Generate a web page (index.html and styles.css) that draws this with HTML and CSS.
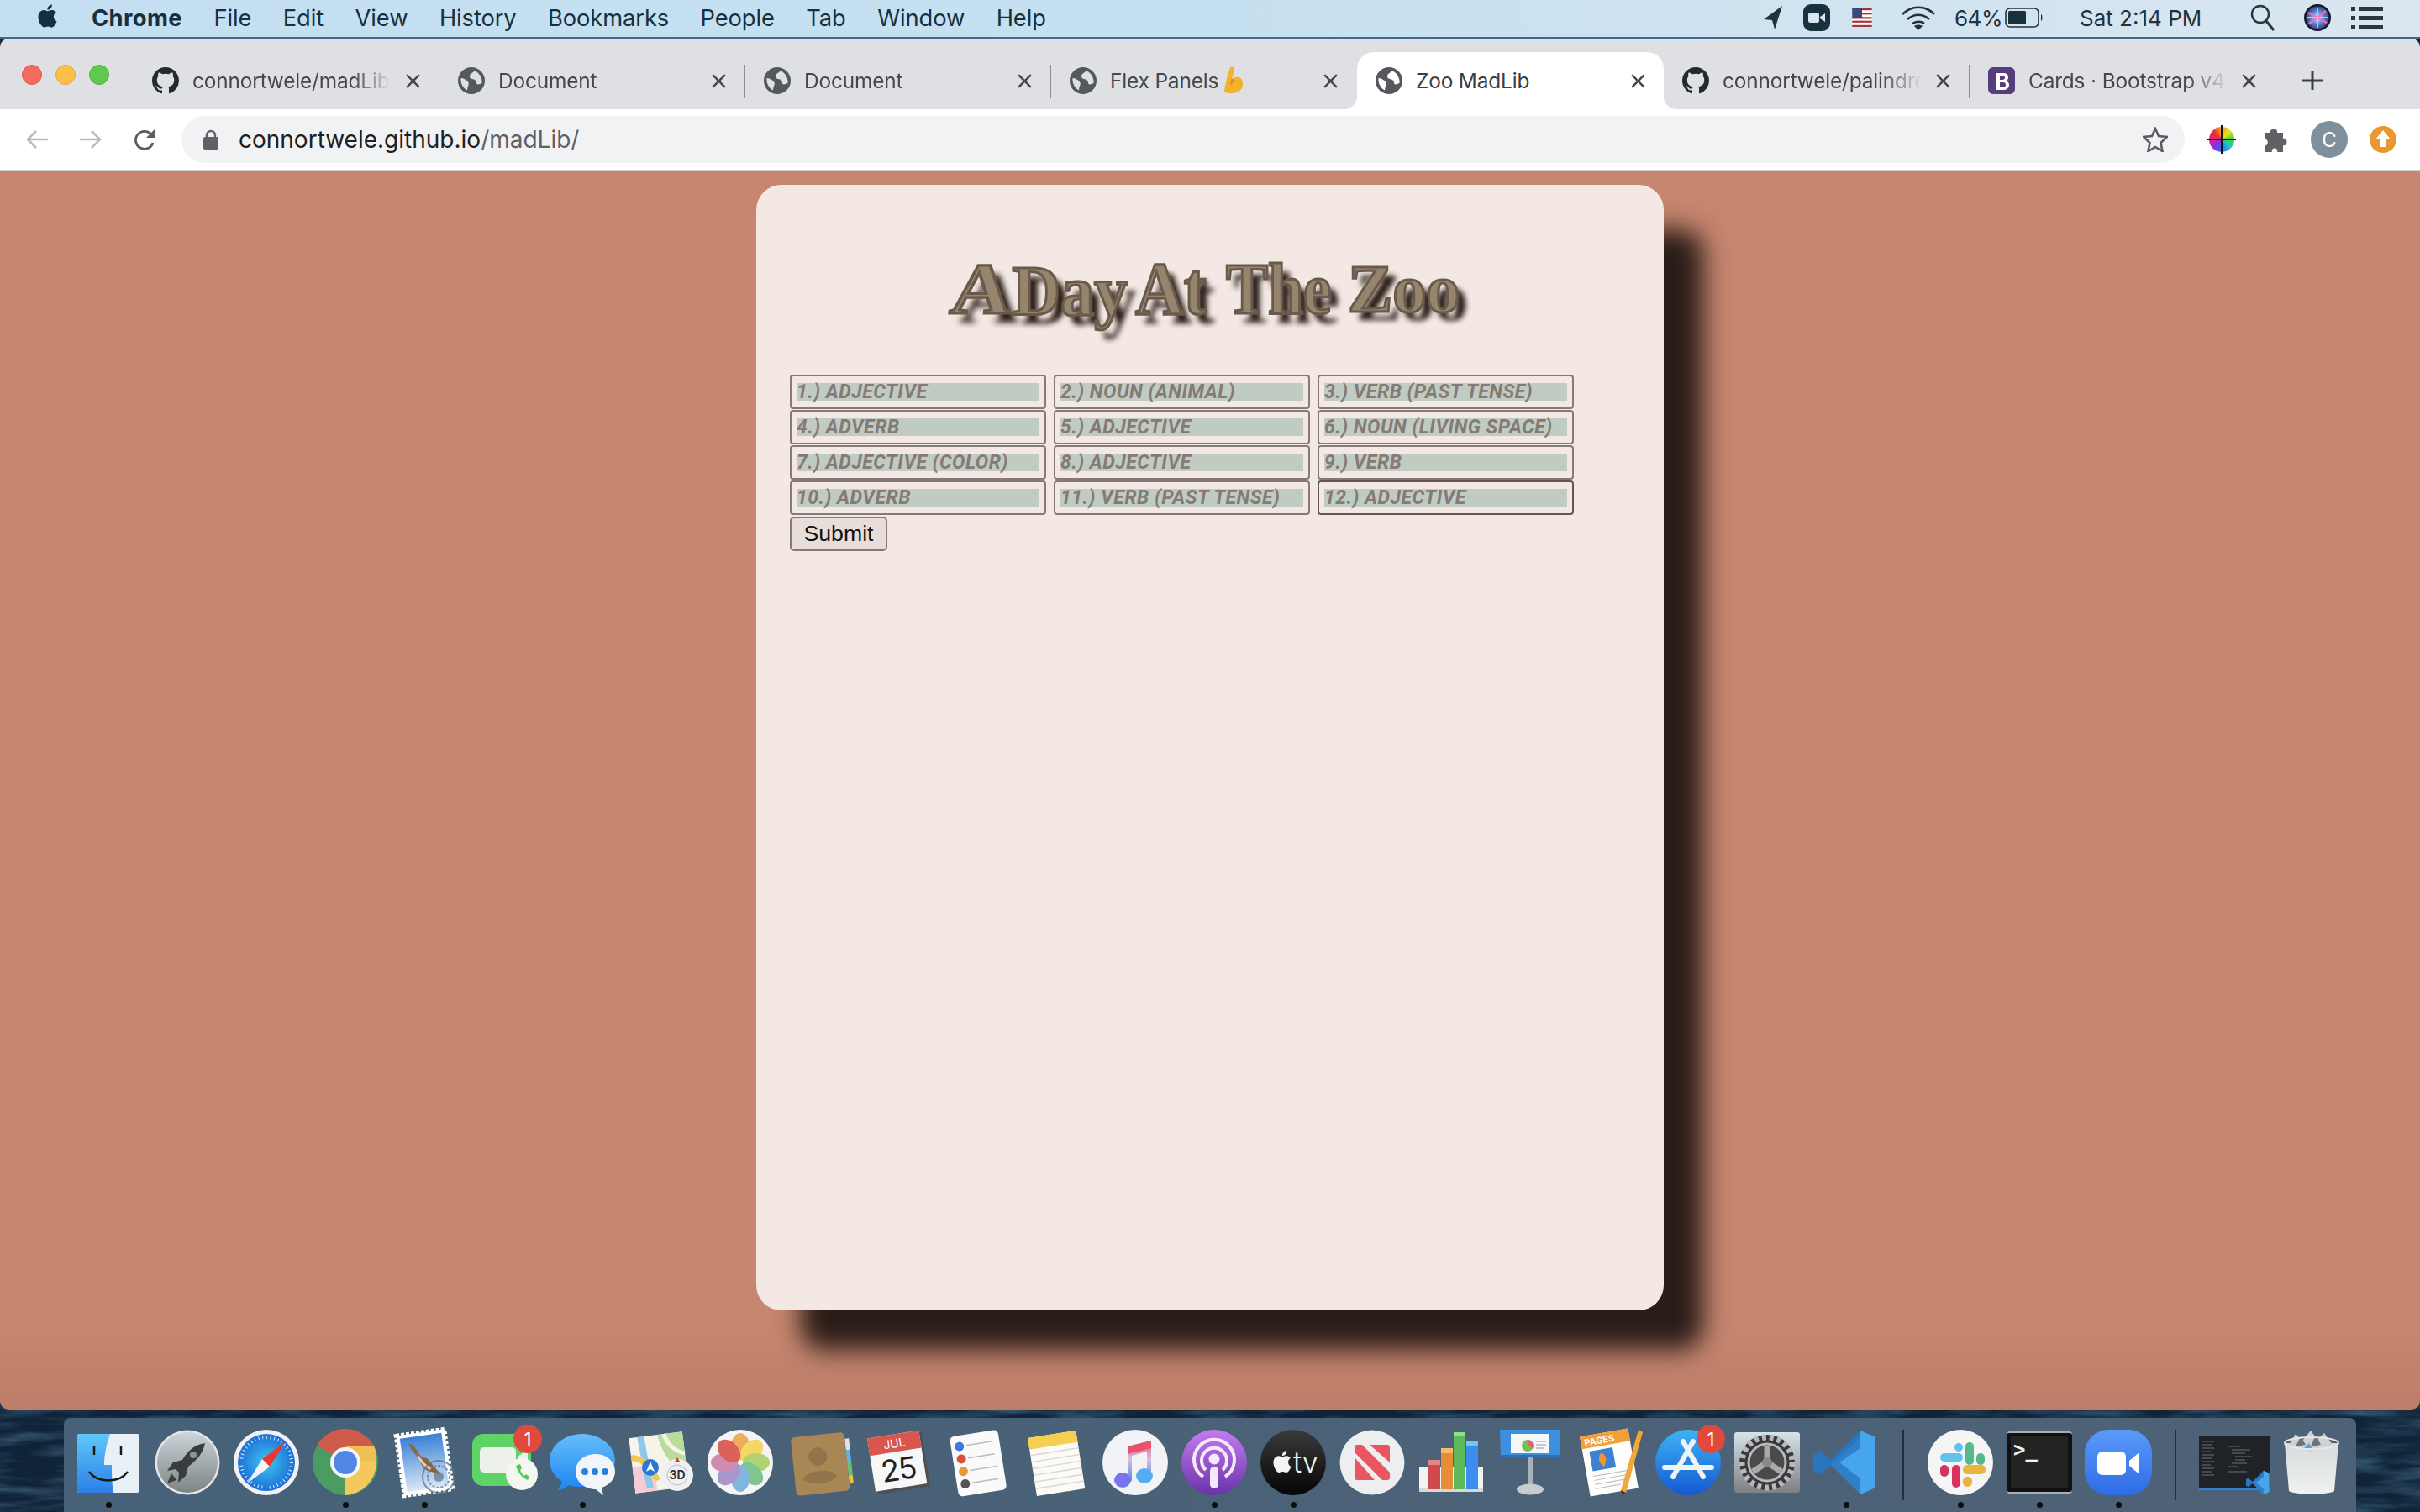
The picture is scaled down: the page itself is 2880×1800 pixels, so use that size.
FILE: index.html
```html
<!DOCTYPE html>
<html lang="en">
<head>
<meta charset="utf-8">
<title>Zoo MadLib</title>
<link rel="stylesheet" href="styles.css">
</head>
<body>
<svg class="defs" aria-hidden="true">
  <symbol id="gh" viewBox="0 0 16 16"><path fill="#24292e" d="M8 0C3.58 0 0 3.58 0 8c0 3.54 2.29 6.53 5.47 7.59.4.07.55-.17.55-.38 0-.19-.01-.82-.01-1.49-2.01.37-2.53-.49-2.69-.94-.09-.23-.48-.94-.82-1.13-.28-.15-.68-.52-.01-.53.63-.01 1.08.58 1.23.82.72 1.21 1.87.87 2.33.66.07-.52.28-.87.51-1.07-1.78-.2-3.64-.89-3.64-3.95 0-.87.31-1.59.82-2.15-.08-.2-.36-1.02.08-2.12 0 0 .67-.21 2.2.82.64-.18 1.32-.27 2-.27.68 0 1.36.09 2 .27 1.53-1.04 2.2-.82 2.2-.82.44 1.1.16 1.92.08 2.12.51.56.82 1.27.82 2.15 0 3.07-1.87 3.75-3.65 3.95.29.25.54.73.54 1.48 0 1.07-.01 1.93-.01 2.2 0 .21.15.46.55.38A8.013 8.013 0 0016 8c0-4.42-3.58-8-8-8z"/></symbol>
  <symbol id="globe" viewBox="0 0 32 32"><circle cx="16" cy="16" r="16" fill="#55585d"/><path class="globe-cut" d="M20 4c-2 3-6 3-6 7 0 4 5 2 7 5 1.500 2 .5 4 2.500 4.500 1.500.3 3-1 5-1.500.5-4-1-11-8.500-15z"/><path class="globe-cut" d="M3.500 13c3 0 6 1.500 8.500 4.500 2 2.500-.5 4-1 10-4-2-8-7-7.500-14.500z"/></symbol>
  <symbol id="close" viewBox="0 0 18 18"><path d="M2 2l14 14M16 2L2 16" fill="none" stroke="#45474b" stroke-width="2.600" stroke-linecap="round"/></symbol>
  <symbol id="apple" viewBox="0 0 24 24"><path d="M12.152 6.896c-.948 0-2.415-1.078-3.96-1.04-2.04.027-3.91 1.183-4.961 3.014-2.117 3.675-.546 9.103 1.519 12.09 1.013 1.454 2.208 3.09 3.792 3.039 1.52-.065 2.09-.987 3.935-.987 1.831 0 2.35.987 3.96.948 1.637-.026 2.676-1.48 3.676-2.948 1.156-1.688 1.636-3.325 1.662-3.415-.039-.013-3.182-1.221-3.22-4.857-.026-3.04 2.48-4.494 2.597-4.559-1.429-2.09-3.623-2.324-4.39-2.376-2-.156-3.675 1.09-4.61 1.09zM15.53 3.83c.843-1.012 1.4-2.427 1.245-3.83-1.207.052-2.662.805-3.532 1.818-.78.896-1.454 2.338-1.273 3.714 1.338.104 2.715-.688 3.559-1.701"/></symbol>
  <symbol id="vsc" viewBox="0 0 78 78"><path fill="#2f80c8" d="M56 1L21 36 7 25 0 29v20l7 4 14-11 35 35 18-8V9z"/><path fill="#236aad" d="M7 25L0 29v20l7 4 49-43 0-9L21 36z" opacity=".45"/><path fill="#47a5ee" d="M56 1l18 8v60l-18 8zM56 22L31 39l25 19z"/></symbol>
</svg>
<svg class="wall" aria-hidden="true">
  <filter id="waves"><feTurbulence type="fractalNoise" baseFrequency=".012 .09" numOctaves="4" seed="4"/><feColorMatrix values="0 0 0 0 .07  0 0 0 0 .17  0 0 0 0 .27  1.300 0 0 0 -.5"/></filter>
  <rect class="wall-rect" width="100%" height="100%" filter="url(#waves)"/>
</svg>

<header class="menubar">
  <svg class="apple-logo"><use href="#apple"/></svg>
  <nav class="menus">
    <span class="menu-app">Chrome</span><span>File</span><span>Edit</span><span>View</span><span>History</span><span>Bookmarks</span><span>People</span><span>Tab</span><span>Window</span><span>Help</span>
  </nav>
  <div class="status">
    <svg class="st st-arrow" viewBox="0 0 24 30"><path d="M23 1L1 17l10 1 3 11z" fill="#20323f"/></svg>
    <svg class="st st-zoom" viewBox="0 0 32 32"><rect width="32" height="32" rx="9" fill="#17313f"/><rect x="6" y="10" width="13" height="12" rx="2.500" fill="#d5e6f1"/><path d="M20 15l6-4v10l-6-4z" fill="#d5e6f1"/></svg>
    <svg class="st st-flag" viewBox="0 0 32 30"><rect width="32" height="30" fill="#fff"/><g fill="#a8323a"><rect width="32" height="3"/><rect y="7" width="32" height="3"/><rect y="14" width="32" height="3"/><rect y="20" width="32" height="3"/><rect y="27" width="32" height="3"/></g><rect width="16" height="15" fill="#3a4a78"/></svg>
    <svg class="st st-wifi" viewBox="0 0 42 30"><g fill="none" stroke="#20323f" stroke-width="2.600"><path d="M2 11c11-11 27-11 38 0"/><path d="M8 17c8-7 18-7 26 0"/><path d="M14 22c4-3 10-3 14 0"/></g><path d="M21 30l-5-5c3-2 7-2 10 0z" fill="#20323f"/></svg>
    <span class="st-text st-pct">64%</span>
    <svg class="st st-batt" viewBox="0 0 46 24"><rect x="1" y="1" width="39" height="22" rx="5" fill="none" stroke="#20323f" stroke-width="1.600"/><rect x="4" y="4" width="21" height="16" rx="1.500" fill="#17313f"/><path d="M43 8c2 1 2 7 0 8z" fill="#20323f"/></svg>
    <span class="st-text st-time">Sat 2:14 PM</span>
    <svg class="st st-search" viewBox="0 0 30 32"><circle cx="12" cy="12" r="10" fill="none" stroke="#26363f" stroke-width="2.400"/><path d="M19 20l9 11" stroke="#26363f" stroke-width="3"/></svg>
    <svg class="st st-siri" viewBox="0 0 32 32"><defs><radialGradient id="siriG"><stop offset="0" stop-color="#d5f2fa"/><stop offset=".55" stop-color="#4d90d8"/><stop offset="1" stop-color="#4a3c80"/></radialGradient></defs><circle cx="16" cy="16" r="16" fill="#111b2b"/><circle cx="16" cy="16" r="13.500" fill="url(#siriG)"/><path d="M5 10l22 12M6 23L26 8" stroke="#f06fb8" stroke-width="2.500"/><path d="M16 4v24M4 16h24" stroke="#7fe6ef" stroke-width="1.800"/></svg>
    <svg class="st st-list" viewBox="0 0 38 32"><g fill="#283741"><rect y="3" width="5" height="5"/><rect x="9" y="3" width="29" height="5"/><rect y="14" width="5" height="5"/><rect x="9" y="14" width="29" height="5"/><rect y="25" width="5" height="5"/><rect x="9" y="25" width="29" height="5"/></g></svg>
  </div>
</header>

<div class="window">
  <div class="tabstrip">
    <div class="lights"><i class="light light-r"></i><i class="light light-y"></i><i class="light light-g"></i></div>
    <div class="tab"><svg class="fav"><use href="#gh"/></svg><span class="tab-title">connortwele/madLib:</span><svg class="tab-close"><use href="#close"/></svg></div><i class="tab-sep"></i>
    <div class="tab"><svg class="fav"><use href="#globe"/></svg><span class="tab-title">Document</span><svg class="tab-close"><use href="#close"/></svg></div><i class="tab-sep"></i>
    <div class="tab"><svg class="fav"><use href="#globe"/></svg><span class="tab-title">Document</span><svg class="tab-close"><use href="#close"/></svg></div><i class="tab-sep"></i>
    <div class="tab"><svg class="fav"><use href="#globe"/></svg><span class="tab-title tab-title-plain">Flex Panels <svg class="bicep" viewBox="0 0 24 34"><path fill="#f4b12c" d="M8 1c3-1 6 0 5 3l-3 11c5-4 12-3 13 4 1 8-5 13-13 13-3 0-7 0-9-2 1-9 4-20 7-29z"/><path fill="#d98d1b" d="M10 15c-2 3-2 6-1 8 1-3 3-5 5-7z"/></svg></span><svg class="tab-close"><use href="#close"/></svg></div><i class="tab-sep tab-sep-off"></i>
    <div class="tab tab-active"><svg class="fav"><use href="#globe"/></svg><span class="tab-title">Zoo MadLib</span><svg class="tab-close"><use href="#close"/></svg></div><i class="tab-sep tab-sep-off"></i>
    <div class="tab"><svg class="fav"><use href="#gh"/></svg><span class="tab-title">connortwele/palindro</span><svg class="tab-close"><use href="#close"/></svg></div><i class="tab-sep"></i>
    <div class="tab"><svg class="fav" viewBox="0 0 32 32"><rect width="32" height="32" rx="6" fill="#563d7c"/><path fill="#fff" d="M10 7h8c4 0 6 2 6 5 0 2-1 4-3 4 3 1 4 3 4 5 0 4-3 6-7 6h-8zm4 3v5h3c2 0 3-1 3-2.500S19 10 17 10zm0 8v6h4c2 0 3-1 3-3s-1-3-3-3z"/></svg><span class="tab-title">Cards · Bootstrap v4.</span><svg class="tab-close"><use href="#close"/></svg></div><i class="tab-sep"></i>
    <svg class="newtab" viewBox="0 0 24 22"><path d="M12 0v22M0 11h24" stroke="#3c3f43" stroke-width="3"/></svg>
  </div>

  <div class="toolbar">
    <svg class="nav-ic" viewBox="0 0 28 24"><path d="M27 12H3M13 2L3 12l10 10" fill="none" stroke="#b9babc" stroke-width="2.600"/></svg>
    <svg class="nav-ic nav-fwd" viewBox="0 0 28 24"><path d="M1 12h24M15 2l10 10-10 10" fill="none" stroke="#b9babc" stroke-width="2.600"/></svg>
    <svg class="nav-ic nav-reload" viewBox="0 0 28 26"><path d="M24 16a10.500 10.500 0 1 1-2-10" fill="none" stroke="#5a5c60" stroke-width="2.800"/><path d="M26 0v10H16z" fill="#5a5c60"/></svg>
    <div class="omnibox">
      <svg class="lock" viewBox="0 0 18 24"><path d="M4 10V7a5 5 0 0 1 10 0v3" fill="none" stroke="#5f6165" stroke-width="2.400"/><rect y="9" width="18" height="15" rx="2" fill="#5f6165"/></svg>
      <span class="url">connortwele.github.io<span class="url-path">/madLib/</span></span>
      <svg class="star" viewBox="0 0 30 30"><path d="M15 2l4 9 10 1-7.500 7 2 10-8.500-5-8.500 5 2-10L1 12l10-1z" fill="none" stroke="#5a5c60" stroke-width="2.600"/></svg>
    </div>
    <div class="wheel"></div>
    <svg class="ext ext-puzzle" viewBox="0 0 30 32"><path fill="#5f6165" d="M2 8h7c-2-6 10-6 8 0h7v7c6-2 6 10 0 8v8h-7c2-6-8-6-6 0H2v-8c5 2 5-9 0-7z"/></svg>
    <div class="avatar">C</div>
    <svg class="ext ext-up" viewBox="0 0 32 32"><circle cx="16" cy="16" r="16" fill="#e8982f"/><path d="M16 5l9 11h-5v9h-8v-9H7z" fill="#fff"/></svg>
  </div>

  <main class="page">
    <section class="card">
      <h1 class="zoo-title"><span class="w-a">A</span> <span class="w-day">Day</span> <span class="w-at">At</span> <span class="w-the">The</span> <span class="w-zoo">Zoo</span></h1>
      <form class="madlib" onsubmit="return false">
        <div class="fields">
          <input class="field" type="text" placeholder="1.) Adjective">
          <input class="field" type="text" placeholder="2.) Noun (Animal)">
          <input class="field" type="text" placeholder="3.) Verb (Past Tense)">
          <input class="field" type="text" placeholder="4.) Adverb">
          <input class="field" type="text" placeholder="5.) Adjective">
          <input class="field" type="text" placeholder="6.) Noun (Living Space)">
          <input class="field" type="text" placeholder="7.) Adjective (Color)">
          <input class="field" type="text" placeholder="8.) Adjective">
          <input class="field" type="text" placeholder="9.) Verb">
          <input class="field" type="text" placeholder="10.) Adverb">
          <input class="field" type="text" placeholder="11.) Verb (Past Tense)">
          <input class="field field-hover" type="text" placeholder="12.) Adjective">
        </div>
        <button class="submit" type="submit">Submit</button>
      </form>
    </section>
  </main>
</div>

<footer class="dock">
  <div class="dock-item run"><svg viewBox="0 0 78 78"><defs><linearGradient id="fb" x1="0" y1="0" x2="0" y2="1"><stop offset="0" stop-color="#5fc8fa"/><stop offset="1" stop-color="#2c7fe6"/></linearGradient></defs><rect x="2" y="5" width="74" height="70" rx="3" fill="#e8f0f8"/><path d="M5 5h36c-4 12-7 24-7 37h9c0 12 0 22 2 33H5a3 3 0 0 1-3-3V8a3 3 0 0 1 3-3z" fill="url(#fb)"/><path d="M22 20v10M54 20v10" stroke="#1a1a1a" stroke-width="2.500"/><path d="M16 50c10 14 36 14 46 0" fill="none" stroke="#1a1a1a" stroke-width="2.500"/></svg></div>
  <div class="dock-item"><svg viewBox="0 0 78 78"><defs><linearGradient id="rk" x1="0" y1="0" x2="0" y2="1"><stop offset="0" stop-color="#c9d5d8"/><stop offset="1" stop-color="#7e8486"/></linearGradient></defs><circle cx="39" cy="39" r="38.500" fill="#e4e6e6"/><circle cx="39" cy="39" r="36" fill="url(#rk)"/><path d="M60 16c-12 2-20 8-27 20l-11 3-7 10 10-2 4 4-1 12 9-8 3-11c11-8 18-17 20-28z" fill="#3a3d3f"/><path d="M20 52l-5 12 11-4z" fill="#3a3d3f"/><circle cx="46" cy="30" r="4" fill="#8c9496"/></svg></div>
  <div class="dock-item"><svg viewBox="0 0 78 78"><defs><radialGradient id="sf"><stop offset="0" stop-color="#42c6ee"/><stop offset="1" stop-color="#1a6fd8"/></radialGradient></defs><circle cx="39" cy="39" r="39" fill="#f2f2f4"/><circle cx="39" cy="39" r="34" fill="url(#sf)"/><circle cx="39" cy="39" r="30" fill="none" stroke="#d7ecfb" stroke-width="4" stroke-dasharray="1 3.700"/><path d="M62 14L34 35l9 9z" fill="#e8392f"/><path d="M16 64l18-29 9 9z" fill="#f4f4f4"/></svg></div>
  <div class="dock-item run"><svg viewBox="0 0 78 78"><circle cx="39" cy="39" r="39" fill="#4a9c62"/><path d="M39 39L5 19A39 39 0 0 1 73 19H39z" fill="#cf5c4b"/><path d="M39 39h37a39 39 0 0 1-38 39z" fill="#f4c85c"/><path d="M39 19h34a39 39 0 0 1 3 20H52z" fill="#eebf52"/><circle cx="39" cy="39" r="18" fill="#f4f6f8"/><circle cx="39" cy="39" r="14" fill="#5188e6"/></svg></div>
  <div class="dock-item run"><svg viewBox="0 0 78 78"><defs><linearGradient id="mailsky" x1="0" y1="0" x2="0" y2="1"><stop offset="0" stop-color="#3a80d6"/><stop offset="1" stop-color="#d9e8f5"/></linearGradient></defs><g transform="rotate(-8 39 39)"><rect x="10" y="3" width="58" height="72" fill="#fff" stroke="#fff" stroke-width="5" stroke-dasharray="4 2"/><rect x="14" y="7" width="50" height="64" fill="url(#mailsky)"/></g><path d="M20 16c3 1 6 3 9 7 3 4 5 8 8 10l5 1c3 3 6 6 8 10 3 3 6 5 8 9-4 0-7-1-10-3-4 0-8-2-11-6-2-4-3-7-5-10-4-5-9-10-12-18z" fill="#8a6540"/><path d="M30 28c3 3 5 7 8 10 2 3 6 5 10 8l-2 2c-6-3-10-7-13-12z" fill="#e2d2ba"/><g fill="none" stroke="#5f7186" opacity=".75"><circle cx="56" cy="56" r="19" stroke-width="2"/><circle cx="56" cy="56" r="13" stroke-width="2" stroke-dasharray="3 2"/></g><circle cx="56" cy="56" r="6" fill="#5f7186" opacity=".7"/></svg></div>
  <div class="dock-item"><svg viewBox="0 0 78 78"><rect x="2" y="5" width="70" height="62" rx="13" fill="#5fd466"/><rect x="11" y="21" width="43" height="30" rx="5" fill="#eef0ec"/><path d="M56 32l12-8v20l-12-6z" fill="#eef0ec"/><circle cx="61" cy="53" r="19" fill="#f4f6f2"/><path d="M54 43c3 9 7 14 14 17l2-4-4-3-2 2c-2-2-4-4-5-7l2-2-2-5z" fill="#50c85a"/><circle cx="68" cy="11" r="17" fill="#e0493c"/><text class="badge-t" x="68" y="19">1</text></svg></div>
  <div class="dock-item run"><svg viewBox="0 0 78 78"><defs><linearGradient id="ms" x1="0" y1="0" x2="0" y2="1"><stop offset="0" stop-color="#67bdfb"/><stop offset="1" stop-color="#1c86f2"/></linearGradient></defs><path d="M39 5c-21 0-39 14-39 32 0 10 6 19 15 25-1 4-4 8-6 10 5 0 10-3 14-6 5 2 10 2 16 2 21 0 39-13 39-31S60 5 39 5z" fill="url(#ms)"/><path d="M55 29c-14 0-24 9-24 21 0 12 11 21 24 21l9 7-2-9c9-3 16-10 16-19 0-12-10-21-23-21z" fill="#f1f4f8"/><g fill="#2a7fd8"><circle cx="42" cy="50" r="4"/><circle cx="54" cy="50" r="4"/><circle cx="66" cy="50" r="4"/></g></svg></div>
  <div class="dock-item"><svg viewBox="0 0 78 78"><g transform="rotate(-7 36 38)"><rect x="4" y="6" width="64" height="66" fill="#f6f4ea"/><path d="M38 6h30v46c-14-2-26-18-30-46z" fill="#b8dc9b"/><path d="M46 6c2 12 10 22 22 26" fill="none" stroke="#f6f4ea" stroke-width="5"/><path d="M4 42c10-4 20 0 26 14v16H4z" fill="#f4cdd4"/><path d="M18 6l4 62" stroke="#90c6ea" stroke-width="8"/><path d="M4 30c10 0 20 10 28 30" stroke="#f2c84f" stroke-width="7" fill="none"/></g><circle cx="26" cy="45" r="10" fill="#2b78d4"/><path d="M26 38l5 12-5-3-5 3z" fill="#fff"/><circle cx="58" cy="54" r="19" fill="#eef0f2"/><circle cx="58" cy="54" r="12" fill="none" stroke="#b8bcc0"/><text class="map3d" x="58" y="59">3D</text><path d="M58 33l3 5h-6z" fill="#e0392f"/></svg></div>
  <div class="dock-item"><svg viewBox="0 0 78 78"><circle cx="39" cy="39" r="39" fill="#f5f5f6"/><g opacity=".85"><ellipse cx="39" cy="20" rx="11" ry="16" fill="#f0a043"/><ellipse cx="39" cy="20" rx="11" ry="16" fill="#f6d24d" transform="rotate(45 39 39)"/><ellipse cx="39" cy="20" rx="11" ry="16" fill="#a4cc5a" transform="rotate(90 39 39)"/><ellipse cx="39" cy="20" rx="11" ry="16" fill="#6cbc7e" transform="rotate(135 39 39)"/><ellipse cx="39" cy="20" rx="11" ry="16" fill="#6da9dc" transform="rotate(180 39 39)"/><ellipse cx="39" cy="20" rx="11" ry="16" fill="#9c86c4" transform="rotate(225 39 39)"/><ellipse cx="39" cy="20" rx="11" ry="16" fill="#c77aa6" transform="rotate(270 39 39)"/><ellipse cx="39" cy="20" rx="11" ry="16" fill="#d8483f" transform="rotate(315 39 39)"/></g></svg></div>
  <div class="dock-item"><svg viewBox="0 0 78 78"><g transform="rotate(-6 39 39)"><rect x="72" y="14" width="5" height="14" fill="#dfe3e6"/><rect x="72" y="28" width="5" height="14" fill="#5bb8e8"/><rect x="72" y="42" width="5" height="16" fill="#6ac06c"/><rect x="72" y="58" width="5" height="10" fill="#eac24a"/><rect x="8" y="6" width="64" height="70" rx="5" fill="#a98755"/><circle cx="38" cy="32" r="11" fill="#92744b"/><path d="M18 58c2-12 38-12 40 0-10 8-30 8-40 0z" fill="#92744b"/></g></svg></div>
  <div class="dock-item"><svg viewBox="0 0 78 78"><g transform="rotate(-9 39 39)"><rect x="10" y="7" width="62" height="66" fill="#4f5052"/><rect x="7" y="5" width="62" height="64" fill="#f7f7f7"/><path d="M7 5h62v21H7z" fill="#d9564f"/><text class="cal-m" x="38" y="21">JUL</text><text class="cal-d" x="38" y="60">25</text></g></svg></div>
  <div class="dock-item"><svg viewBox="0 0 78 78"><g transform="rotate(-9 39 39)"><rect x="11" y="4" width="58" height="72" rx="5" fill="#fafafa"/><g stroke="#bcbcbc" stroke-width="1.500"><path d="M29 17h32M29 32h32M29 47h32M29 62h32"/></g><circle cx="21" cy="17" r="5.500" fill="#3c78e0"/><circle cx="21" cy="32" r="5.500" fill="#dc5037"/><circle cx="21" cy="47" r="5.500" fill="#e89a3a"/><circle cx="21" cy="62" r="5.500" fill="#555"/></g></svg></div>
  <div class="dock-item"><svg viewBox="0 0 78 78"><g transform="rotate(-9 39 39)"><rect x="10" y="5" width="58" height="70" fill="#fbfaf4"/><rect x="10" y="5" width="58" height="14" fill="#f7cf4e"/><g stroke="#d8d8d4" stroke-width="1.400"><path d="M10 26h58M10 34h58M10 42h58M10 50h58M10 58h58M10 66h58"/></g></g></svg></div>
  <div class="dock-item"><svg viewBox="0 0 78 78"><defs><linearGradient id="mu" x1="0" y1="0" x2="0" y2="1"><stop offset="0" stop-color="#e9516f"/><stop offset=".45" stop-color="#d9c0d8"/><stop offset="1" stop-color="#5a8cf2"/></linearGradient></defs><circle cx="39" cy="39" r="39" fill="#f2f3f6"/><path d="M30 20l28-7v42h-5V26L35 31v30h-5z" fill="url(#mu)"/><path d="M30 20l28-7v9L30 29z" fill="#e9516f"/><ellipse cx="24" cy="60" rx="10" ry="9" fill="#7a74ec"/><ellipse cx="50" cy="55" rx="10" ry="9" fill="#56acf0"/></svg></div>
  <div class="dock-item run"><svg viewBox="0 0 78 78"><defs><linearGradient id="pd" x1="0" y1="0" x2="0" y2="1"><stop offset="0" stop-color="#c37cf0"/><stop offset="1" stop-color="#6a33a8"/></linearGradient></defs><circle cx="39" cy="39" r="39" fill="url(#pd)"/><g fill="none" stroke="#f4e9fa" stroke-width="4"><path d="M26 56a24 24 0 1 1 26 0"/><path d="M29 48a15 15 0 1 1 20 0"/></g><circle cx="39" cy="35" r="6.500" fill="#f4e9fa"/><rect x="34" y="44" width="10" height="26" rx="5" fill="#f4e9fa"/></svg></div>
  <div class="dock-item run"><svg viewBox="0 0 78 78"><defs><linearGradient id="tvb" x1="0" y1="0" x2="0" y2="1"><stop offset="0" stop-color="#3a3a3c"/><stop offset="1" stop-color="#050505"/></linearGradient></defs><circle cx="39" cy="39" r="39" fill="url(#tvb)"/><use href="#apple" x="13" y="24" width="26" height="28" fill="#f4f4f4"/><text class="tv-t" x="39" y="51">tv</text></svg></div>
  <div class="dock-item"><svg viewBox="0 0 78 78"><circle cx="39" cy="39" r="38.500" fill="#eceef0"/><path d="M18 21a3 3 0 0 1 3-3h6l33 33v6a3 3 0 0 1-3 3h-6L18 27z" fill="#ea5560"/><path d="M18 33l24 27H21a3 3 0 0 1-3-3zM36 18h21a3 3 0 0 1 3 3v18z" fill="#ea5560"/></svg></div>
  <div class="dock-item"><svg viewBox="0 0 78 78"><rect x="1" y="45" width="76" height="29" fill="#f2f3f3"/><rect x="1" y="70" width="76" height="4" fill="#d6d8da"/><rect x="12" y="40" width="14" height="31" fill="#cf4a4f"/><rect x="12" y="36" width="14" height="6" fill="#e08684"/><rect x="27" y="26" width="14" height="45" fill="#e88c37"/><rect x="27" y="22" width="14" height="6" fill="#f4bc6b"/><rect x="42" y="6" width="14" height="65" fill="#5cba5a"/><rect x="42" y="3" width="14" height="5" fill="#93dc8e"/><rect x="57" y="18" width="14" height="53" fill="#3d8df0"/><rect x="57" y="14" width="14" height="6" fill="#76c4f0"/></svg></div>
  <div class="dock-item"><svg viewBox="0 0 78 78"><rect x="36" y="32" width="6" height="36" fill="#a9b0b6"/><ellipse cx="39" cy="71" rx="16" ry="6.500" fill="#c6ccd0"/><path d="M3 0h72l-1 31H4z" fill="#3d8fe0"/><rect x="2" y="30" width="74" height="3" fill="#2d6fb8"/><rect x="16" y="5" width="46" height="23" fill="#f6f6f6"/><circle cx="36" cy="19" r="7" fill="#73c152"/><path d="M36 19v-7a7 7 0 0 1 6 10z" fill="#e75f7b"/><path d="M46 14h12M46 18h12M46 22h10" stroke="#999"/></svg></div>
  <div class="dock-item"><svg viewBox="0 0 78 78"><g transform="rotate(-10 39 39)"><rect x="10" y="3" width="58" height="72" fill="#fdfdfb"/><path d="M10 3h58v15H10z" fill="#f2a036"/><text class="pages-t" x="14" y="15">PAGES</text><rect x="18" y="22" width="28" height="24" fill="#3c82cf"/><path d="M32 26c5 3 6 10 0 17-6-7-5-14 0-17z" fill="#ef9632"/><g stroke="#b7b7b7"><path d="M18 52h42M18 57h42M18 62h42M18 67h30"/></g></g><path d="M74 0l5 3-20 72-5 3-1-6z" fill="#f0a83a"/><path d="M53 72l1 6 5-3z" fill="#333"/></svg></div>
  <div class="dock-item"><svg viewBox="0 0 78 78"><defs><linearGradient id="ap" x1="0" y1="0" x2="0" y2="1"><stop offset="0" stop-color="#3cb4f5"/><stop offset="1" stop-color="#1358d0"/></linearGradient></defs><circle cx="39" cy="39" r="39" fill="url(#ap)"/><g stroke="#f0f2f4" stroke-width="6" stroke-linecap="round"><path d="M45 14L21 56"/><path d="M33 14l24 42"/><path d="M11 45h56"/></g><circle cx="66" cy="11" r="17" fill="#e0493c"/><text class="badge-t" x="66" y="19">1</text></svg></div>
  <div class="dock-item"><svg viewBox="0 0 78 78"><defs><linearGradient id="sp" x1="0" y1="0" x2="0" y2="1"><stop offset="0" stop-color="#d5e4ea"/><stop offset="1" stop-color="#7e8082"/></linearGradient></defs><rect width="78" height="72" y="3" rx="3" fill="url(#sp)"/><circle cx="39" cy="39" r="33" fill="#3a3a3c"/><circle cx="39" cy="39" r="30" fill="none" stroke="#b8b9bb" stroke-width="7" stroke-dasharray="5 4"/><circle cx="39" cy="39" r="22" fill="#4a4a4c" stroke="#b8b9bb" stroke-width="3"/><path d="M39 39V19M39 39L22 50M39 39l17 11" stroke="#a8a9ab" stroke-width="7"/><circle cx="39" cy="39" r="6" fill="#88898b"/></svg></div>
  <div class="dock-item run"><svg viewBox="0 0 78 78"><use href="#vsc" x="0" y="0" width="78" height="78"/></svg></div>
  <div class="dock-sep"></div>
  <div class="dock-item run"><svg viewBox="0 0 78 78"><circle cx="39" cy="39" r="39" fill="#f5f5f6"/><g fill="#5fc3ea"><rect x="32" y="16" width="10" height="10" rx="5"/><rect x="15" y="28" width="27" height="10" rx="5"/></g><g fill="#57b88a"><rect x="45" y="15" width="10" height="27" rx="5"/><rect x="58" y="28" width="10" height="14" rx="5"/></g><g fill="#d7325e"><rect x="15" y="42" width="10" height="14" rx="5"/><rect x="29" y="42" width="10" height="27" rx="5"/></g><g fill="#e9b53f"><rect x="42" y="42" width="27" height="11" rx="5"/><rect x="42" y="56" width="11" height="12" rx="5"/></g></svg></div>
  <div class="dock-item run"><svg viewBox="0 0 78 78"><rect y="2" width="78" height="74" rx="4" fill="#a9b0b4"/><rect y="4" width="78" height="70" rx="3" fill="#111"/><rect x="5" y="8" width="68" height="62" fill="#232323"/><text class="term-t" x="8" y="32">&gt;_</text></svg></div>
  <div class="dock-item run"><svg viewBox="0 0 78 78"><defs><linearGradient id="zm" x1="0" y1="0" x2="0" y2="1"><stop offset="0" stop-color="#5a9bf8"/><stop offset="1" stop-color="#2e6be6"/></linearGradient></defs><rect x="-1" width="80" height="78" rx="28" fill="url(#zm)"/><rect x="14" y="26" width="34" height="28" rx="6" fill="#fff"/><path d="M52 37l12-10v26L52 43z" fill="#fff"/></svg></div>
  <div class="dock-sep"></div>
  <div class="dock-item"><svg viewBox="0 0 78 78"><rect x="-1" y="8" width="84" height="64" fill="#1f2226"/><g stroke="#6a7078" stroke-width="1"><path d="M3 14h14M3 18h12M3 22h14M3 26h10M3 30h14M3 34h12M3 38h14M3 42h10M3 46h14M3 50h12M3 54h14"/><path d="M34 20h14M38 24h22M38 28h16M42 32h20M42 36h12M38 40h18M34 44h12M34 50h22"/></g><rect x="-1" y="69" width="84" height="3" fill="#2e82d8"/><use href="#vsc" x="55" y="48" width="29" height="30"/></svg></div>
  <div class="dock-item"><svg viewBox="0 0 78 78"><defs><linearGradient id="tr" x1="0" y1="0" x2="0" y2="1"><stop offset="0" stop-color="#d8dbdd"/><stop offset="1" stop-color="#f0f1f1"/></linearGradient></defs><path d="M7 16l5 57c8 5 46 5 54 0l5-57z" fill="url(#tr)"/><path d="M12 18l8-13 8 8 10-12 8 11 8-8 10 14-27 8z" fill="#cfd2d4"/><path d="M20 20l6-12 6 10zM38 20l6-14 6 12z" fill="#6f7376"/><path d="M30 22l6-6 4 7z" fill="#4fa7d8"/><ellipse cx="39" cy="16" rx="32" ry="7" fill="none" stroke="#e4e6e7" stroke-width="2"/></svg></div>
</footer>
</body>
</html>
```

FILE: styles.css
```css
* { box-sizing: border-box; }
html, body { margin: 0; height: 100%; }
body {
  width: 2880px;
  height: 1800px;
  overflow: hidden;
  display: flex;
  flex-direction: column;
  background: #0f2438;
  font-family: Inter, "Liberation Sans", sans-serif;
  color: #16303f;
  position: relative;
}
.defs { position: absolute; width: 0; height: 0; }
.wall { position: absolute; inset: 0; width: 100%; height: 100%; }
.wall-rect { fill: #000; }

/* Menu bar */
.menubar {
  position: relative;
  height: 46px;
  flex: none;
  display: flex;
  align-items: center;
  padding: 0 44px 2px 43px;
  background: linear-gradient(to right, #c3dff1, #c5e0f0 50%, #dae6f0);
  border-bottom: 2px solid #40688a;
}
.apple-logo { width: 27px; height: 32px; fill: #12303f; margin-top: -4px; }
.menus { display: flex; gap: 37.500px; margin-left: 39px; font-size: 27.3px; letter-spacing: -.1px; }
.menu-app { font-weight: 700; letter-spacing: .4px; }
.status { margin-left: auto; display: flex; align-items: center; }
.st { display: block; }
.st-text { font-size: 26px; color: #1f3240; white-space: nowrap; }
.st-arrow { width: 24px; height: 30px; }
.st-zoom { width: 32px; height: 32px; margin-left: 24px; }
.st-flag { width: 32px; height: 22px; margin-left: 22px; }
.st-wifi { width: 42px; height: 30px; margin-left: 30px; }
.st-pct { width: 50px; margin-left: 22px; letter-spacing: -.5px; }
.st-batt { width: 46px; height: 24px; margin-left: 10px; }
.st-time { width: 154px; margin-left: 43px; }
.st-search { width: 30px; height: 32px; margin-left: 49px; }
.st-siri { width: 32px; height: 32px; margin-left: 34px; }
.st-list { width: 38px; height: 32px; margin-left: 24px; }

/* Window */
.window {
  position: relative;
  height: 1632px;
  flex: none;
  display: flex;
  flex-direction: column;
  border-radius: 10px;
  overflow: hidden;
}
.tabstrip {
  --tab-bg: #dfe0e4;
  height: 84px;
  flex: none;
  display: flex;
  align-items: flex-end;
  background: #dfe0e4;
  border-top: 2px solid #e4e4e6;
}
.lights { width: 159px; flex: none; display: flex; gap: 16px; padding-left: 26px; margin-bottom: 29px; }
.light { width: 24px; height: 24px; border-radius: 50%; }
.light-r { background: #f46c60; border: 1px solid #e0574c; }
.light-y { background: #fbbf4a; border: 1px solid #e2a63a; }
.light-g { background: #5fc94f; border: 1px solid #4db13f; }
.tab {
  position: relative;
  width: 363px;
  height: 68px;
  flex: none;
  display: flex;
  align-items: center;
  padding: 0 22px 0 22px;
  background: var(--tab-bg);
  color: #45474b;
  font-size: 24.4px;
  letter-spacing: -.15px;
}
.tab-sep { width: 1px; height: 40px; flex: none; background: #8f9094; margin-bottom: 13px; }
.tab-sep-off { background: transparent; }
.fav { width: 32px; height: 32px; flex: none; }
.globe-cut { fill: var(--tab-bg); }
.tab-title {
  flex: 1;
  min-width: 0;
  margin-left: 16px;
  white-space: nowrap;
  -webkit-mask-image: linear-gradient(to right, #000 80%, transparent);
  mask-image: linear-gradient(to right, #000 80%, transparent);
}
.tab-title-plain { -webkit-mask-image: none; mask-image: none; display: flex; align-items: center; gap: 6px; }
.tab-active .tab-title { -webkit-mask-image: none; mask-image: none; }
.bicep { width: 24px; height: 34px; }
.tab-close { width: 17px; height: 17px; flex: none; margin-left: 17px; }
.tab-active { --tab-bg: #fff; background: #fff; width: 365px; color: #3c3e42; border-radius: 20px 20px 0 0; z-index: 1; margin-right: -1px; }
.tab-active::before,
.tab-active::after { content: ""; position: absolute; bottom: 0; width: 16px; height: 16px; }
.tab-active::before { left: -16px; background: radial-gradient(circle at 0 0, transparent 16px, #fff 16.5px); }
.tab-active::after { right: -16px; background: radial-gradient(circle at 100% 0, transparent 16px, #fff 16.5px); }
.newtab { width: 24px; height: 22px; margin: 0 0 23px 32px; flex: none; }

/* Toolbar */
.toolbar {
  height: 74px;
  flex: none;
  display: flex;
  align-items: flex-start;
  padding: 8px 0 0 30px;
  background: #fff;
  border-bottom: 2px solid #cfcfcf;
}
.nav-ic { width: 28px; height: 24px; margin-top: 16px; flex: none; }
.nav-fwd { margin-left: 36px; }
.nav-reload { margin-left: 36px; height: 26px; }
.omnibox {
  width: 2384px;
  height: 56px;
  margin-left: 30px;
  flex: none;
  display: flex;
  align-items: center;
  padding: 0 20px 0 26px;
  border-radius: 28px;
  background: #f1f2f4;
}
.lock { width: 18px; height: 24px; flex: none; }
.url { margin-left: 24px; font-size: 28px; color: #1e1f21; white-space: nowrap; }
.url-path { color: #5e6064; }
.star { width: 30px; height: 30px; margin-left: auto; }
.ext { flex: none; }
.wheel {
  position: relative;
  width: 30px;
  height: 30px;
  margin: 13px 0 0 29px;
  flex: none;
  border-radius: 50%;
  background: conic-gradient(#f5a623, #e8e21f, #39d24a, #22c1c3, #2d6cf0, #8a2be2, #e0218f, #e8312a, #f5a623);
}
.wheel::before,
.wheel::after { content: ""; position: absolute; background: #111; }
.wheel::before { left: 14px; top: -2px; width: 2px; height: 34px; }
.wheel::after { top: 14px; left: -2px; width: 34px; height: 2px; }
.ext-puzzle { width: 30px; height: 32px; margin: 12px 0 0 34px; }
.avatar {
  width: 44px;
  height: 44px;
  margin: 6px 0 0 27px;
  flex: none;
  display: flex;
  align-items: center;
  justify-content: center;
  border-radius: 50%;
  background: #7f909d;
  color: #fff;
  font-size: 24px;
}
.ext-up { width: 32px; height: 32px; margin: 12px 0 0 26px; }

/* Page */
.page {
  flex: 1;
  min-height: 0;
  padding-top: 16px;
  background: linear-gradient(to bottom, #c6866f 0, #c6866f 1380px, #bc7e69 100%);
}
.card {
  width: 1080px;
  height: 1340px;
  margin: 0 auto;
  padding: 82px 40px 0;
  border-radius: 30px;
  background: #f3e8e3;
  box-shadow: 50px 50px 30px -3px #2a1d18;
}
.zoo-title {
  margin: 0 0 52px;
  text-align: center;
  font: 700 80px/92px "Liberation Serif", serif;
  color: #94856c;
  -webkit-text-stroke: 3px #6a5a4b;
  text-shadow: 10px 10px 6px #2a1d18;
}
.zoo-title span { display: inline-block; transform-origin: left bottom; }
.zoo-title .w-a { transform: skewX(-6deg) scale(1.25, 1.08); }
.zoo-title .w-day { transform: translateY(1px) scaleY(1.05); }
.zoo-title .w-at { transform: translateX(-11px) scaleY(1.1); }
.zoo-title .w-the { transform: translateX(-8px) scale(.94, 1.08); }
.zoo-title .w-zoo { transform: translate(-16px, -4px); }
.fields {
  display: grid;
  grid-template-columns: repeat(3, 305px);
  grid-auto-rows: 42px;
  column-gap: 9px;
}
.field {
  width: 305px;
  height: 41px;
  padding: 8px 6px;
  border: 2px solid #857a75;
  border-radius: 4px;
  background: #c0cbc2;
  background-clip: content-box;
  outline: none;
  font: italic 700 23px/20px Roboto, sans-serif;
  letter-spacing: .5px;
  text-transform: uppercase;
  color: #857a75;
}
.field::placeholder { color: #857a75; opacity: 1; }
.field-hover { border-color: #655750; }
.submit {
  display: block;
  width: 116px;
  height: 41px;
  margin-top: 1px;
  padding: 0;
  border: 2px solid #857a75;
  border-radius: 5px;
  background: #e7dddb;
  color: #111;
  font: 26.67px "Liberation Sans", sans-serif;
}

/* Dock */
.dock {
  position: relative;
  width: 2728px;
  height: 112px;
  margin: 10px auto 0;
  flex: none;
  display: flex;
  gap: 16px;
  padding: 14px 0 0 14px;
  background: linear-gradient(to right, #466178, #4e6277);
  border-radius: 8px 8px 0 0;
}
.dock-item { width: 78px; flex: none; display: flex; flex-direction: column; align-items: center; }
.dock-item svg { width: 78px; height: 78px; display: block; overflow: visible; }
.run::after { content: ""; width: 7px; height: 7px; margin-top: 8px; border-radius: 50%; background: #0c0c0c; }
.dock-sep { width: 26px; flex: none; height: 84px; background: linear-gradient(#1e3040, #1e3040) center / 2px 100% no-repeat; }
.badge-t { font: 22px Inter, sans-serif; fill: #fff; text-anchor: middle; }
.map3d { font: 700 14px Inter, sans-serif; fill: #333; text-anchor: middle; }
.cal-m { font: 14px Inter, sans-serif; fill: #fff; text-anchor: middle; }
.cal-d { font: 36px Inter, sans-serif; fill: #222; text-anchor: middle; letter-spacing: -1px; }
.tv-t { font: 300 34px Inter, sans-serif; fill: #f4f4f4; }
.pages-t { font: 700 11px Inter, sans-serif; fill: #fff; }
.term-t { font: 700 24px "DejaVu Sans Mono", monospace; fill: #f2f2f2; }
```
